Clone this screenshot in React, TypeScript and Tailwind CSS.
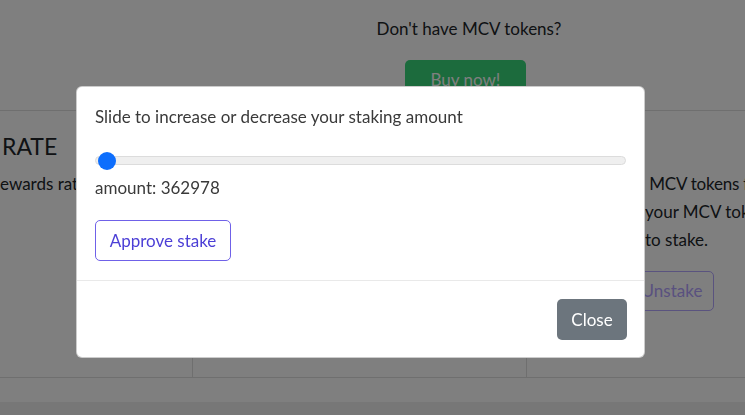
import { useState } from "react";

const font = { fontFamily: "Lato, 'Noto Sans', sans-serif" };

export default function App() {
  const [amount, setAmount] = useState(362978);

  return (
    <div
      className="relative w-[745px] h-[415px] overflow-hidden bg-white text-[#212529]"
      style={font}
    >
      {/* page behind the modal */}
      <div className="grid grid-cols-[193px_1fr] h-[111px] border-b border-[#dedede]">
        <div />
        <div className="flex flex-col items-center pt-[17px]">
          <p className="text-[17px] leading-6">Don't have MCV tokens?</p>
          <button className="mt-[19px] mr-[7px] w-[121px] h-[40px] rounded-[5px] bg-[#38d67a] text-white text-[17px]">
            Buy now!
          </button>
        </div>
      </div>

      <div className="grid grid-cols-[193px_334px_1fr] h-[267px] border-b border-[#dedede]">
        <div className="border-r border-[#dedede] overflow-hidden whitespace-nowrap pt-[21px]">
          <h4 className="text-[23px] leading-7 pl-[2px]">RATE</h4>
          <p className="mt-[10px] text-[17px] leading-7">ewards rate</p>
        </div>
        <div className="border-r border-[#dedede]" />
        <div className="overflow-hidden whitespace-nowrap pt-[59px] pl-[103px]">
          <p className="pl-[15px] text-[17px] leading-7 tracking-[-0.2px]">&nbsp;MCV tokens for</p>
          <p className="pl-[15px] text-[17px] leading-7">your MCV tokens</p>
          <p className="pl-[15px] text-[17px] leading-7">to stake.</p>
          <button className="mt-[17px] w-[84px] h-[40px] rounded-[5px] border border-[#b4a6ff] text-[#b3a2ff] text-[17px]">
            Unstake
          </button>
        </div>
      </div>

      <div className="h-[24px]" />
      <div className="h-[40px] bg-[#eeeeee]" />

      {/* backdrop */}
      <div className="fixed inset-0 bg-black/50" />

      {/* modal */}
      <div className="absolute left-[76px] top-[86px] w-[569px] rounded-[6px] bg-white border border-black/20">
        <div className="px-[18px] pt-[18px] pb-[19px]">
          <p className="text-[17px] leading-6 text-[#3a3a3a]">
            Slide to increase or decrease your staking amount
          </p>
          <input
            type="range"
            min={0}
            max={100000000}
            value={amount}
            onChange={(e) => setAmount(Number(e.target.value))}
            className="block mt-[27px] w-full h-[9px] appearance-none rounded-full bg-[#efefef] border border-[#dcdcdc] outline-none [&::-webkit-slider-thumb]:appearance-none [&::-webkit-slider-thumb]:w-[18px] [&::-webkit-slider-thumb]:h-[18px] [&::-webkit-slider-thumb]:rounded-full [&::-webkit-slider-thumb]:bg-[#0d6efd] [&::-webkit-slider-thumb]:border-0"
          />
          <p className="mt-[11px] text-[17px] leading-6 text-[#3a3a3a]">amount: {amount}</p>
          <button className="mt-[20px] w-[136px] h-[41px] rounded-[5px] border border-[#6f61e8] text-[#4c3fd6] text-[17px]">
            Approve stake
          </button>
        </div>
        <div className="border-t border-[#e9e9e9] flex justify-end px-[17px] pt-[18px] pb-[17px]">
          <button className="w-[70px] h-[41px] rounded-[5px] bg-[#6c757d] text-white text-[17px]">
            Close
          </button>
        </div>
      </div>
    </div>
  );
}
